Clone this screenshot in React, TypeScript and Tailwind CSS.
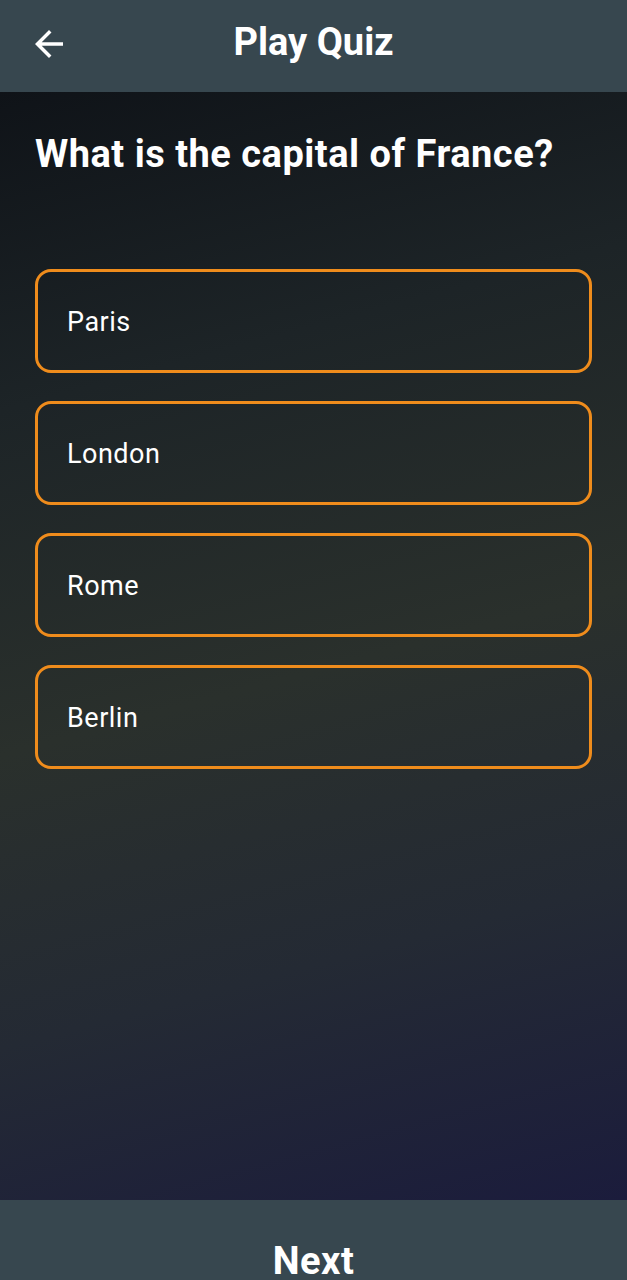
const options = ["Paris", "London", "Rome", "Berlin"];

function BackArrow() {
  return (
    <svg width="42" height="42" viewBox="0 0 24 24" fill="currentColor">
      <path d="M20 11H7.83l5.59-5.59L12 4l-8 8 8 8 1.41-1.41L7.83 13H20v-2z" />
    </svg>
  );
}

export default function App() {
  return (
    <div
      className="flex h-[1280px] w-full flex-col overflow-hidden text-white"
      style={{ fontFamily: "Roboto, 'Noto Sans', sans-serif" }}
    >
      <header className="relative flex h-[92px] shrink-0 items-center justify-center bg-[#37474f] pb-[8px]">
        <button className="absolute left-[28px] top-[23px] text-white">
          <BackArrow />
        </button>
        <h1 className="text-[38px] font-bold leading-none">Play Quiz</h1>
      </header>

      <main className="flex-1 bg-[linear-gradient(165deg,#0f1318_0%,#1d2427_25%,#2a302c_52%,#242a34_75%,#1b1c3c_100%)] px-[35px] pt-[40px]">
        <h2 className="text-[38px] font-bold leading-[44px] tracking-[0.5px]">
          What is the capital of France?
        </h2>

        <div className="mt-[93px] flex flex-col gap-[28px]">
          {options.map((opt) => (
            <button
              key={opt}
              className="flex h-[104px] w-[557px] items-center rounded-[16px] border-[3px] border-[#ef8c1c] px-[29px] pt-[2px] text-left text-[27px] tracking-[0.5px]"
            >
              {opt}
            </button>
          ))}
        </div>
      </main>

      <footer className="flex h-[80px] shrink-0 justify-center bg-[#37474f] pt-[42px]">
        <span className="text-[38px] font-bold leading-none tracking-[0.5px]">Next</span>
      </footer>
    </div>
  );
}
